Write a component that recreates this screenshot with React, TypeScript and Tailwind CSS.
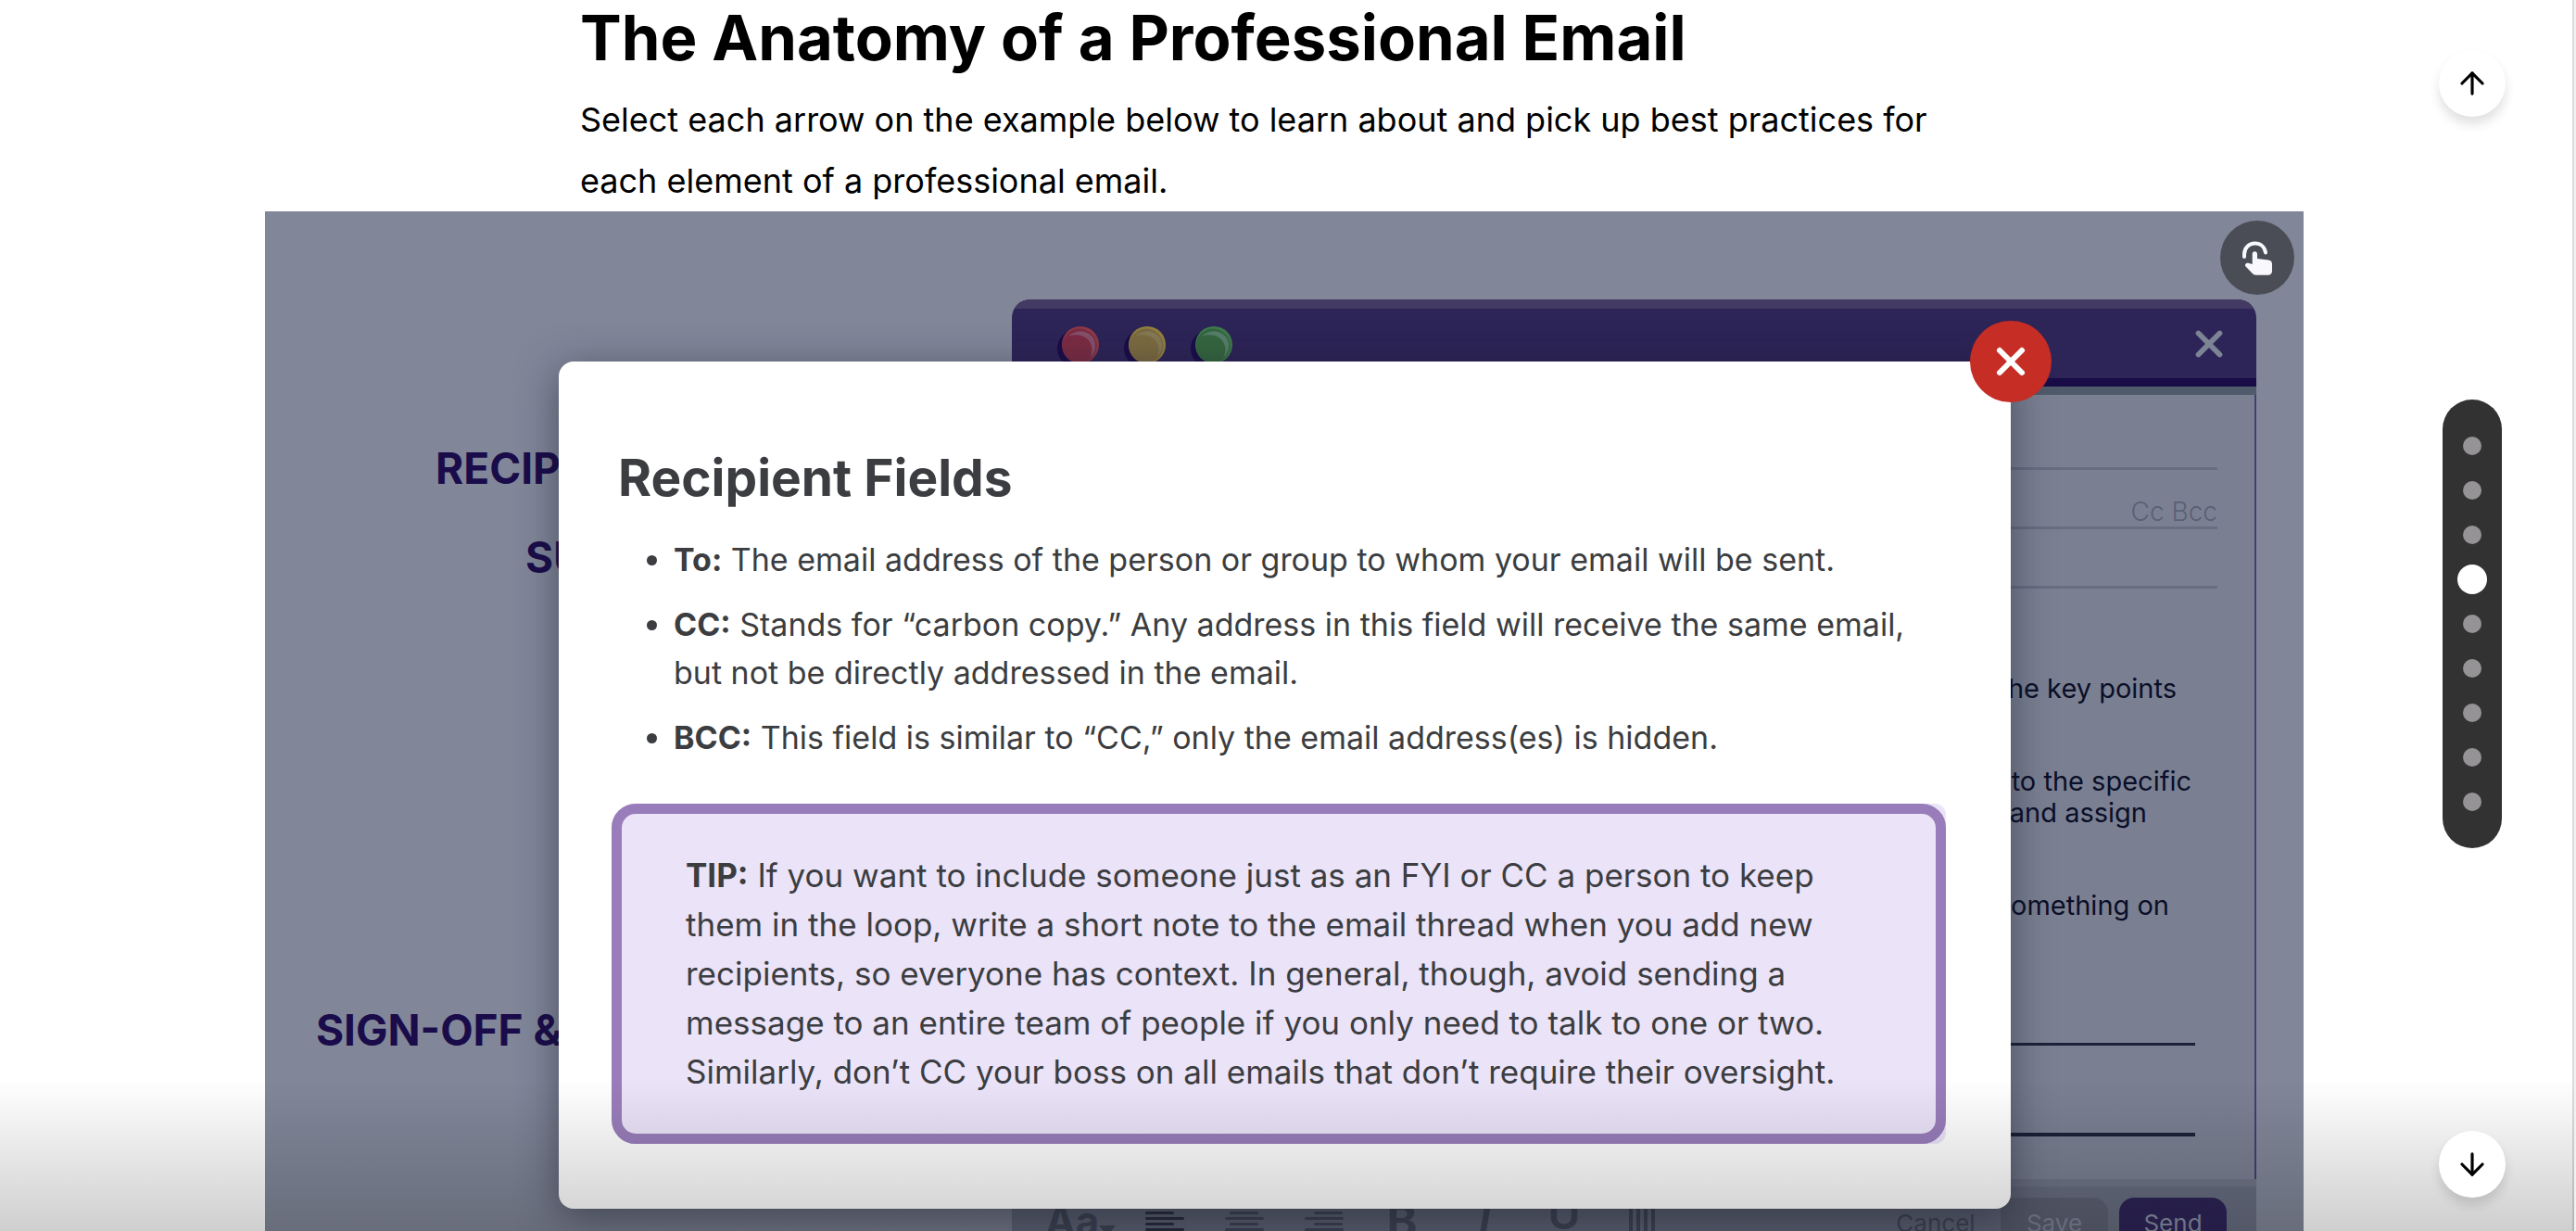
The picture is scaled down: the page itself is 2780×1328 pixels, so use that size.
import React from "react";
import { ArrowDown, ArrowUp, X } from "lucide-react";

const LABEL = "whitespace-nowrap font-bold text-[46px] leading-[60px] text-[#1a0c4a]";

const STOPS = [0, 1, 2, 3, 4, 5, 6, 7, 8];

function TapIcon() {
  return (
    <svg viewBox="0 0 34 38" className="h-[38px] w-[34px]" fill="none" aria-hidden="true">
      <path d="M3 18v-2.500C3 8.500 8 3.500 14.500 3.500c6 0 10.500 4 11.500 10" stroke="#f8f8fd" strokeWidth="4" strokeLinecap="round" />
      <path
        d="M14.300 12.200c1.500 0 2.700 1.200 2.700 2.700v5.200l12 1.400c2.500.3 4 1.600 4 4.200v7.800c0 2.700-1.600 4.200-4.300 4.200H15.500c-1.500 0-2.700-.5-3.700-1.600L4.600 28.600c-.9-1-.8-2.400 0-3.200 1-.9 2.200-.8 3.600-.3l3.500 1V14.900c0-1.500 1.100-2.700 2.600-2.700z"
        fill="#f8f8fd"
      />
    </svg>
  );
}

function Bead({ rim, face, glow }: { rim: string; face: string; glow: string }) {
  return (
    <svg viewBox="0 0 46 46" className="h-[46px] w-[46px]" aria-hidden="true">
      <circle cx="21" cy="25" r="20" fill="#1a0c4a" />
      <circle cx="26" cy="21" r="20" fill={rim} />
      <circle cx="25" cy="22" r="18.500" fill={face} />
      <path d="M13 11.500C25 1 44 8 42 24c-.5 4-2.500 7.500-5.500 10.500C43 20 32 6 13 11.500z" fill={glow} />
    </svg>
  );
}

function AlignIcon({ kind, color }: { kind: "left" | "center" | "right"; color: string }) {
  const short = kind === "left" ? 0 : kind === "center" ? 5 : 10;
  return (
    <svg viewBox="0 0 42 30" className="h-[30px] w-[42px]" fill={color} aria-hidden="true">
      <rect x={short} y="0" width="31" height="3" rx="1.500" />
      <rect x="0" y="6" width="42" height="3" rx="1.500" />
      <rect x={short} y="12" width="31" height="3" rx="1.500" />
      <rect x="0" y="18" width="42" height="3" rx="1.500" />
      <rect x={short} y="24" width="31" height="3" rx="1.500" />
    </svg>
  );
}

function EmailWindow() {
  return (
    <section className="flex w-[1343px] flex-col overflow-hidden rounded-t-[20px]">
      <header className="flex h-[94px] items-center justify-between border-b-[9px] border-t-[10px] border-b-[#190c47] border-t-[#433b63] bg-[#2d2457] pl-12 pr-7">
        <div className="flex gap-[26px] pt-[7px]">
          <Bead rim="#8f3849" face="#7b2c43" glow="#85506b" />
          <Bead rim="#93803e" face="#7c6b41" glow="#857955" />
          <Bead rim="#3f7a4d" face="#35663f" glow="#557e6b" />
        </div>
        <button aria-label="Close message">
          <X className="size-[46px] text-[#7c8496]" strokeWidth={3} aria-hidden="true" />
        </button>
      </header>
      <div className="h-[9px] bg-[#4f5a6b]" />
      <div className="flex h-[846px] flex-col border-r-2 border-[#453d72] bg-[#7a8092] px-10 text-right">
        <div className="h-[81px] border-b-[3px] border-[#686d80]" />
        <div className="h-16 border-b-[3px] border-[#686d80] pt-[25px] text-[28px] font-light leading-[40px] text-[#5a6075]">Cc Bcc</div>
        <div className="h-16 border-b-[3px] border-[#686d80]" />
        <div className="pt-[91px] text-[29px] leading-[34px] text-[#0a0e27]">
          <p className="pr-11">Introduce the key points</p>
          <p className="pr-7 pt-[66px]">Respond to the specific</p>
          <p className="pr-[76px]">questions and assign</p>
          <p className="pr-[52px] pt-[66px]">Share something on</p>
        </div>
        <div className="mr-6 mt-[131px] h-[3px] shrink-0 bg-[#1b2138]" />
        <div className="mr-6 mt-[94px] h-1 shrink-0 bg-[#1b2138]" />
      </div>
      <footer className="flex h-[100px] items-start border-t-8 border-[#6f7587] bg-[#676d80] pl-9 pr-8 pt-3 text-[26px] leading-[46px] text-[#464c5d]">
        <button className="-mt-2 flex h-[66px] w-[108px] items-center text-[44px] font-bold leading-[66px]">
          Aa
          <svg viewBox="0 0 18 11" className="mt-5 h-[11px] w-[18px]" fill="currentColor" aria-hidden="true"><path d="M0 0h18l-9 11z" /></svg>
        </button>
        <button aria-label="Align left" className="mt-[15px]"><AlignIcon kind="left" color="#2c3144" /></button>
        <button aria-label="Align center" className="ml-11 mt-[15px]"><AlignIcon kind="center" color="#464c5d" /></button>
        <button aria-label="Align right" className="ml-11 mt-[15px]"><AlignIcon kind="right" color="#464c5d" /></button>
        <button className="-mt-2 ml-11 w-[38px] text-[50px] font-bold leading-[66px]">B</button>
        <button className="-mt-2 ml-[60px] w-5 text-[50px] font-semibold italic leading-[66px]">I</button>
        <button className="-mt-4 ml-[58px] w-9 text-[48px] font-semibold leading-[66px]">U</button>
        <button aria-label="Columns" className="ml-[52px] mt-2">
          <svg viewBox="0 0 28 36" className="h-9 w-7" fill="none" stroke="currentColor" strokeWidth="4" aria-hidden="true"><path d="M2 0v36M10 0v36M18 0v36M26 0v36M0 2h28" /></svg>
        </button>
        <div className="ml-auto flex h-20 gap-3">
          <button className="w-[116px] pb-6">Cancel</button>
          <button className="w-[116px] rounded-2xl bg-[#5b6072] pb-6 text-[#7d8396]">Save</button>
          <button className="w-[116px] rounded-2xl bg-[#2d2457] pb-6 text-[#868ca0]">Send</button>
        </div>
      </footer>
    </section>
  );
}

function RecipientDialog() {
  return (
    <div role="dialog" aria-labelledby="dialog-title" className="absolute left-[317px] right-[316px] top-[162px] h-[914px] rounded-2xl bg-white px-16 pt-[90px] text-[#3b3d40] shadow-[0_8px_44px_rgba(20,24,40,0.5)]">
      <button aria-label="Close" className="absolute -right-11 -top-11 flex size-[88px] items-center justify-center rounded-full bg-[#c52d25] text-white">
        <X className="size-12" strokeWidth={3} aria-hidden="true" />
      </button>
      <h2 id="dialog-title" className="text-[55px] font-bold leading-[70px]">Recipient Fields</h2>
      <ul className="mt-7 flex list-disc flex-col gap-[18px] whitespace-nowrap pl-[60px] text-[34px] leading-[52px]">
        <li><strong>To:</strong> The email address of the person or group to whom your email will be sent.</li>
        <li>
          <strong>CC:</strong> Stands for “carbon copy.” Any address in this field will receive the same email,
          <br />
          but not be directly addressed in the email.
        </li>
        <li><strong>BCC:</strong> This field is similar to “CC,” only the email address(es) is hidden.</li>
      </ul>
      <div className="-ml-[7px] mr-[6px] mt-[45px] rounded-l-[26px] rounded-r-xl bg-[#ebe3f8]">
        <p className="whitespace-nowrap rounded-[26px] border-[11px] border-[#997dba] bg-[#ebe3f8] px-[69px] py-10 text-[35px] leading-[53px]">
          <strong>TIP:</strong> If you want to include someone just as an FYI or CC a person to keep
          <br />
          them in the loop, write a short note to the email thread when you add new
          <br />
          recipients, so everyone has context. In general, though, avoid sending a
          <br />
          message to an entire team of people if you only need to talk to one or two.
          <br />
          Similarly, don’t CC your boss on all emails that don’t require their oversight.
        </p>
      </div>
    </div>
  );
}

export default function App() {
  return (
    <div className="relative h-screen overflow-hidden border-r-2 border-[#f2f2f2] bg-white font-['Inter',sans-serif] text-black">
      <main className="h-full border-r-2 border-[#dcdcdc] pr-1">
        <div className="mx-auto max-w-[2200px]">
          <div className="h-[228px] whitespace-nowrap pl-[340px]">
            <h1 className="text-[67px] font-bold leading-[82px]">The Anatomy of a Professional Email</h1>
            <p className="pt-[14px] text-[36px] leading-[66px]">
              Select each arrow on the example below to learn about and pick up best practices for
              <br />
              each element of a professional email.
            </p>
          </div>
          <div className="relative h-[1160px] overflow-hidden bg-[#818799]">
            <div className="flex justify-between pr-[51px] pt-[95px]">
              <div className="w-0 pt-[152px]">
                <p className={LABEL + " ml-[184px]"}>RECIPIENT FIELDS</p>
                <p className={LABEL + " ml-[281px] mt-9"}>SUBJECT LINE</p>
                <p className={LABEL + " ml-[55px] mt-[450px]"}>SIGN-OFF &amp; SIGNATURE</p>
              </div>
              <EmailWindow />
            </div>
            <button aria-label="Show interactive elements" className="absolute right-[10px] top-[10px] flex size-20 items-center justify-center rounded-full bg-[#4b4d56]">
              <TapIcon />
            </button>
            <RecipientDialog />
          </div>
        </div>
      </main>
      <div className="pointer-events-none absolute inset-x-0 bottom-0 h-[164px] bg-linear-to-b from-transparent to-black/19" />
      <nav aria-label="Sections" className="absolute bottom-9 right-[74px] top-[54px] flex flex-col items-center justify-between">
        <button aria-label="Previous section" className="flex size-[72px] items-center justify-center rounded-full bg-white shadow-[0_8px_12px_rgba(0,0,0,0.12)]">
          <ArrowUp className="size-[38px]" strokeWidth={2} aria-hidden="true" />
        </button>
        <div className="flex w-16 flex-col items-center rounded-full bg-[#323232] py-[26px]">
          {STOPS.map((n) => (
            <button key={n} aria-label={"Section " + (n + 1)} className="flex size-12 items-center justify-center">
              <span className={n === 3 ? "size-8 rounded-full bg-white" : "size-5 rounded-full bg-[#959395]"} />
            </button>
          ))}
        </div>
        <button aria-label="Next section" className="flex size-[72px] items-center justify-center rounded-full bg-white shadow-[0_8px_12px_rgba(0,0,0,0.12)]">
          <ArrowDown className="size-[38px]" strokeWidth={2} aria-hidden="true" />
        </button>
      </nav>
    </div>
  );
}
